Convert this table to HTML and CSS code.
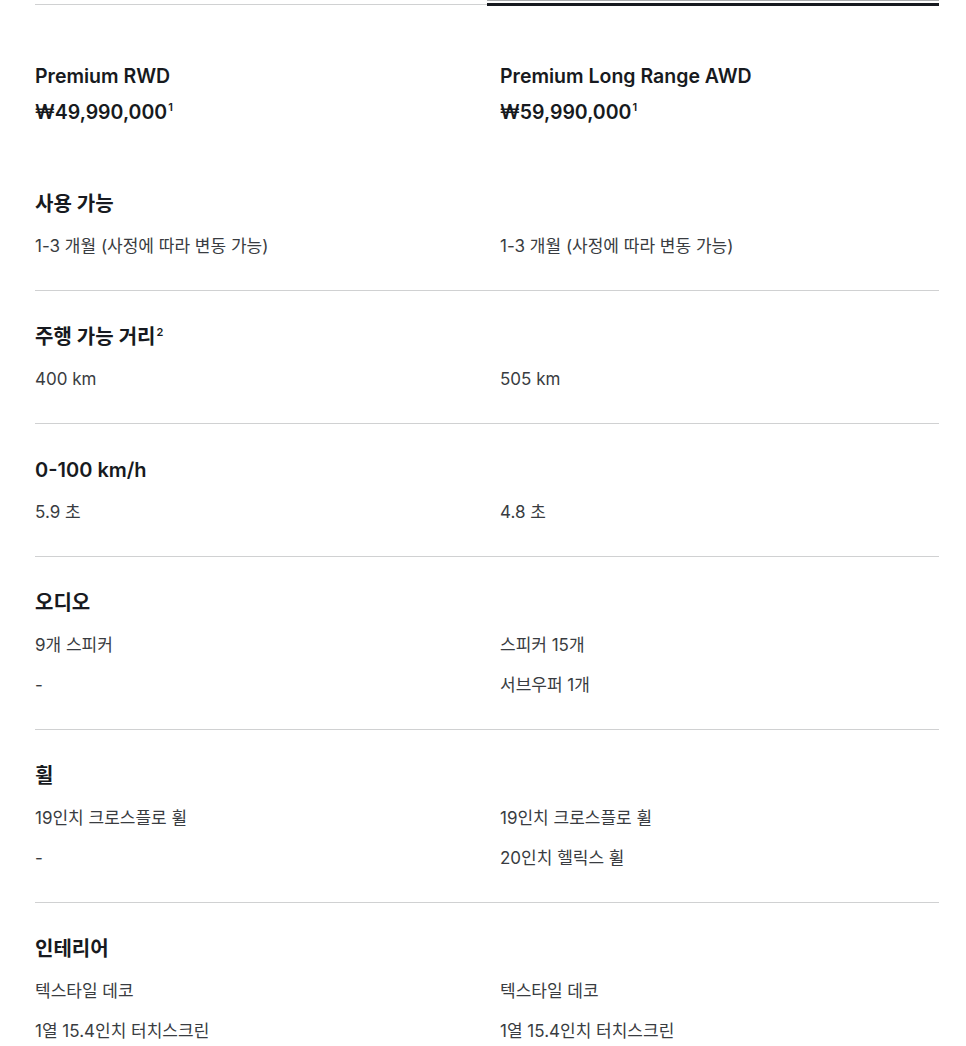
FILE: index.html
```html
<!DOCTYPE html>
<html lang="ko">
<head>
<meta charset="utf-8">
<link rel="stylesheet" href="styles.css">
</head>
<body>
<div class="page">
  <div class="tabs">
    <div class="tab"></div>
    <div class="tab active"><span class="bar"></span></div>
  </div>
  <div class="grid head">
    <div>
      <div class="model">Premium RWD</div>
      <div class="price">₩49,990,000<sup>1</sup></div>
    </div>
    <div>
      <div class="model">Premium Long Range AWD</div>
      <div class="price">₩59,990,000<sup>1</sup></div>
    </div>
  </div>

  <section class="spec first">
    <h3>사용 가능</h3>
    <div class="grid"><div class="vals"><p>1-3 개월 (사정에 따라 변동 가능)</p></div><div class="vals"><p>1-3 개월 (사정에 따라 변동 가능)</p></div></div>
  </section>
  <section class="spec">
    <h3>주행 가능 거리<sup>2</sup></h3>
    <div class="grid"><div class="vals"><p>400 km</p></div><div class="vals"><p>505 km</p></div></div>
  </section>
  <section class="spec">
    <h3>0-100 km/h</h3>
    <div class="grid"><div class="vals"><p>5.9 초</p></div><div class="vals"><p>4.8 초</p></div></div>
  </section>
  <section class="spec">
    <h3>오디오</h3>
    <div class="grid"><div class="vals"><p>9개 스피커</p><p>-</p></div><div class="vals"><p>스피커 15개</p><p>서브우퍼 1개</p></div></div>
  </section>
  <section class="spec">
    <h3>휠</h3>
    <div class="grid"><div class="vals"><p>19인치 크로스플로 휠</p><p>-</p></div><div class="vals"><p>19인치 크로스플로 휠</p><p>20인치 헬릭스 휠</p></div></div>
  </section>
  <section class="spec">
    <h3>인테리어</h3>
    <div class="grid"><div class="vals"><p>텍스타일 데코</p><p>1열 15.4인치 터치스크린</p></div><div class="vals"><p>텍스타일 데코</p><p>1열 15.4인치 터치스크린</p></div></div>
  </section>
</div>
</body>
</html>
```

FILE: styles.css
```css
* { box-sizing: border-box; }
html, body { margin: 0; padding: 0; background: #fff; }
body {
  font-family: Inter, "Noto Sans CJK KR", sans-serif;
  color: #171a20;
  overflow: hidden;
}
.page { padding: 0 27px 0 35px; }
.tabs {
  display: grid;
  grid-template-columns: 1fr 1fr;
  height: 6px;
}
.tab { border-bottom: 1px solid #d0d1d2; height: 5px; }
.tab.active {
  border-bottom: none;
  border-top: 1px solid #a9abad;
  height: 6px;
  padding-top: 2px;
}
.tab .bar { display: block; height: 3px; background: #171a20; }
.grid {
  display: grid;
  grid-template-columns: 1fr 1fr;
  column-gap: 26px;
}
.head { margin-top: 58px; margin-bottom: 33px; }
.model {
  font-size: 19.5px;
  font-weight: 600;
  line-height: 24px;
  margin-bottom: 11px;
}
.price {
  font-size: 19.5px;
  font-weight: 600;
  line-height: 26px;
}
sup {
  font-size: 11px;
  line-height: 0;
  vertical-align: 0;
  position: relative;
  top: -8px;
  margin-left: 1px;
}
.spec {
  border-top: 1px solid #d0d1d2;
  padding: 33px 0 32px;
}
.spec.first { border-top: none; }
.spec h3 {
  margin: 0 0 17px;
  font-size: 20px;
  font-weight: 600;
  line-height: 26px;
}
.vals { display: flex; flex-direction: column; gap: 16px; }
.vals p {
  margin: 0;
  font-size: 17px;
  line-height: 24px;
  color: #393c41;
}
```
